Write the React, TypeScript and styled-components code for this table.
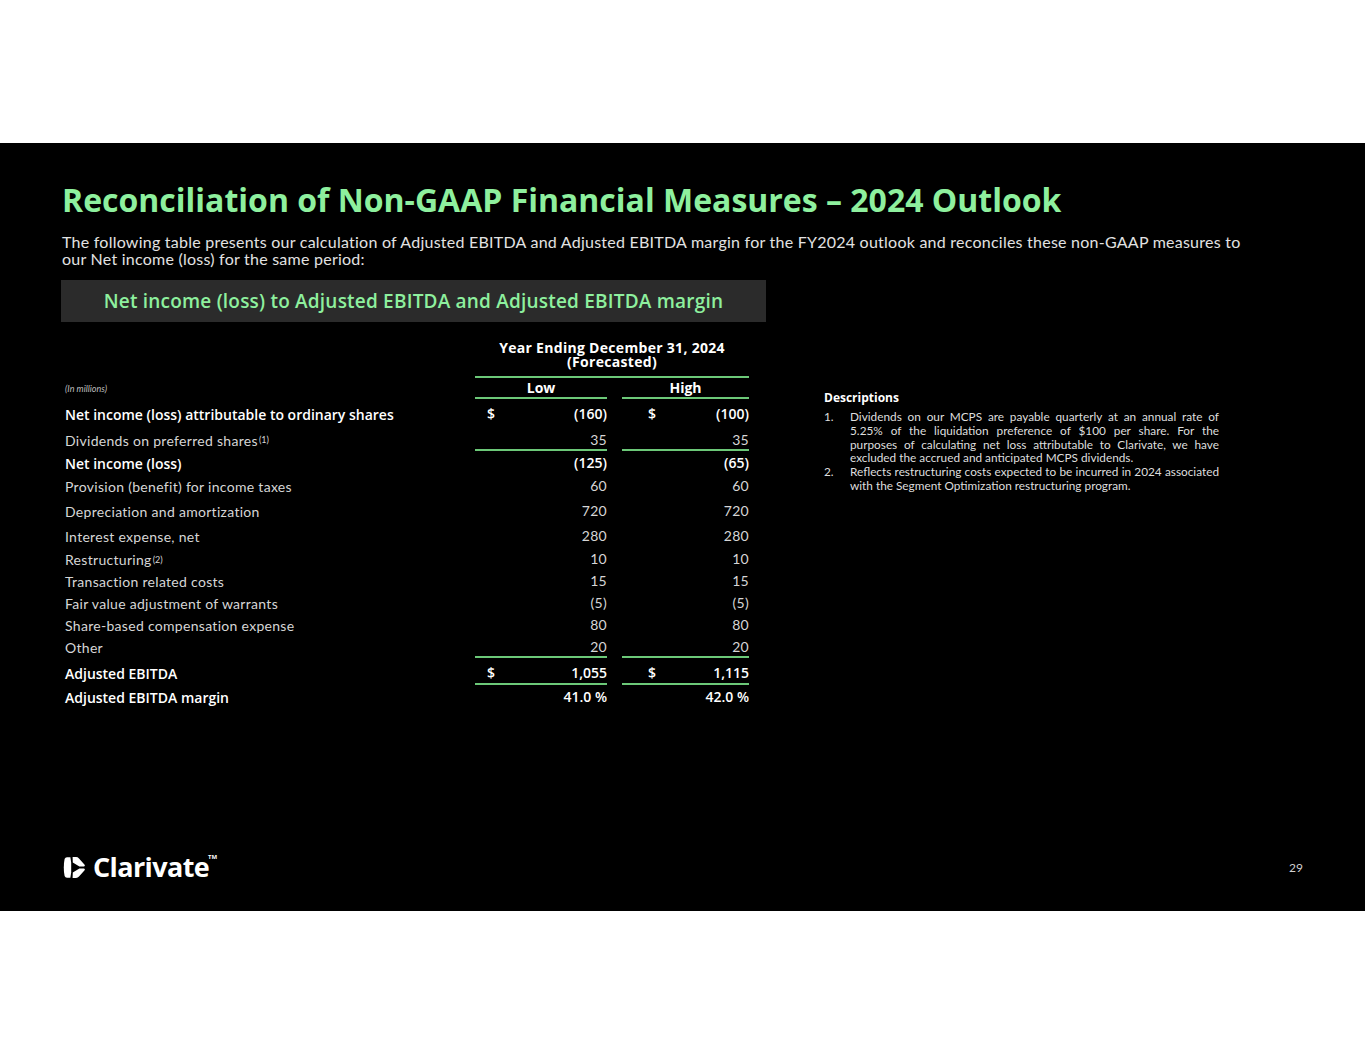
import styled, { createGlobalStyle } from "styled-components";

const GlobalStyle = createGlobalStyle`
  html, body {
    margin: 0;
    padding: 0;
    background: #ffffff;
  }
  body {
    font-family: "Lato", "Liberation Sans", sans-serif;
  }
`;

const GREEN = "#8ef09e";
const LINE = "#6cc878";
const HEAVY = `"Open Sans", "Lato", sans-serif`;

const Page = styled.div`
  width: 1365px;
  height: 1055px;
  padding-top: 143px;
  box-sizing: border-box;
  background: #fff;
`;

const Slide = styled.section`
  width: 1365px;
  height: 768px;
  background: #000;
  box-sizing: border-box;
  padding: 38px 62px 31px 62px;
  display: flex;
  flex-direction: column;
  color: #fff;
`;

const Title = styled.h1`
  margin: 0;
  font-family: ${HEAVY};
  font-size: 32px;
  line-height: 37px;
  font-weight: 700;
  color: ${GREEN};
  white-space: nowrap;
`;

const Intro = styled.p`
  margin: 15px 0 0 0;
  font-size: 16px;
  line-height: 17px;
  letter-spacing: 0.24px;
  color: #e2e2e2;
  max-width: 1184px;
`;

const Content = styled.div`
  display: flex;
  flex-direction: row;
  align-items: flex-start;
  margin-top: 13px;
`;

const LeftCol = styled.div`
  width: 705px;
  margin-left: -1px;
`;

const Banner = styled.div`
  height: 42px;
  background: #2b2b2b;
  display: flex;
  align-items: center;
  justify-content: center;
  color: ${GREEN};
  font-family: ${HEAVY};
  font-size: 19px;
  font-weight: 600;
  letter-spacing: 0.2px;
`;

const Table = styled.div`
  margin: 19px 0 0 4px;
  display: flex;
  flex-direction: column;
`;

const Row = styled.div<{ $h: number; $bold?: boolean }>`
  display: grid;
  grid-template-columns: 395px 132px 127px;
  column-gap: 15px;
  height: ${(p) => p.$h}px;
  font-size: 14px;
  font-family: ${(p) => (p.$bold ? HEAVY : `"Lato", sans-serif`)};
  font-weight: ${(p) => (p.$bold ? 600 : 400)};
  letter-spacing: ${(p) => (p.$bold ? "0" : "0.3px")};
  color: ${(p) => (p.$bold ? "#ffffff" : "#d6d6d6")};
`;

const Label = styled.div<{ $pt?: number }>`
  display: flex;
  align-items: center;
  padding-top: ${(p) => p.$pt ?? 0}px;
  white-space: nowrap;
`;

const Sup = styled.sup`
  font-size: 9px;
  line-height: 0;
  margin-left: 1px;
  letter-spacing: 0;
`;

const Value = styled.div<{ $line?: boolean; $pad: number; $pt?: number }>`
  display: flex;
  align-items: center;
  justify-content: space-between;
  padding-left: ${(p) => p.$pad}px;
  padding-top: ${(p) => p.$pt ?? 0}px;
  border-bottom: 2px solid ${(p) => (p.$line ? LINE : "transparent")};
`;

const Heading = styled.div`
  grid-column: 2 / 4;
  text-align: center;
  font-family: ${HEAVY};
  font-size: 14px;
  line-height: 14px;
  font-weight: 700;
  color: #fff;
  border-bottom: 2px solid ${LINE};
`;

const ColHead = styled.div`
  display: flex;
  align-items: center;
  justify-content: center;
  font-family: ${HEAVY};
  font-weight: 700;
  letter-spacing: 0;
  color: #fff;
  border-bottom: 2px solid ${LINE};
`;

const Units = styled.div`
  display: flex;
  align-items: center;
  font-size: 9px;
  font-style: italic;
  letter-spacing: 0;
  color: #bdbdbd;
`;

const RightCol = styled.aside`
  width: 395px;
  margin: 111px 0 0 58px;
`;

const DescTitle = styled.div`
  font-family: ${HEAVY};
  font-size: 12px;
  line-height: 14px;
  font-weight: 700;
  color: #fff;
`;

const Notes = styled.ol`
  list-style: none;
  margin: 5px 0 0 0;
  padding: 0;
`;

const Note = styled.li`
  display: grid;
  grid-template-columns: 26px 369px;
  font-size: 11.8px;
  line-height: 13.8px;
  color: #dedede;
`;

const NoteText = styled.span`
  text-align: justify;
`;

const Footer = styled.footer`
  margin-top: auto;
  display: flex;
  align-items: center;
  justify-content: space-between;
  height: 26px;
`;

const Logo = styled.div`
  display: flex;
  align-items: center;
  gap: 7px;
  margin-left: 1px;
`;

const Wordmark = styled.span`
  position: relative;
  font-family: ${HEAVY};
  font-size: 27px;
  font-weight: 700;
  letter-spacing: -0.6px;
  color: #fff;
  line-height: 26px;
`;

const TM = styled.span`
  position: absolute;
  right: -8px;
  top: 0px;
  font-size: 6px;
  line-height: 6px;
  letter-spacing: 0;
`;

const PageNum = styled.span`
  font-size: 12px;
  color: #d0d0d0;
`;

type Line = {
  label: string;
  sup?: string;
  low: string;
  high: string;
  h: number;
  bold?: boolean;
  dollar?: boolean;
  line?: boolean;
  pt?: number;
};

const rows: Line[] = [
  { label: "Net income (loss) attributable to ordinary shares", low: "(160)", high: "(100)", h: 30, bold: true, dollar: true },
  { label: "Dividends on preferred shares", sup: "(1)", low: "35", high: "35", h: 22, line: true },
  { label: "Net income (loss)", low: "(125)", high: "(65)", h: 24, bold: true },
  { label: "Provision (benefit) for income taxes", low: "60", high: "60", h: 23 },
  { label: "Depreciation and amortization", low: "720", high: "720", h: 26 },
  { label: "Interest expense, net", low: "280", high: "280", h: 25 },
  { label: "Restructuring ", sup: "(2)", low: "10", high: "10", h: 21 },
  { label: "Transaction related costs", low: "15", high: "15", h: 22 },
  { label: "Fair value adjustment of warrants", low: "(5)", high: "(5)", h: 22 },
  { label: "Share-based compensation expense", low: "80", high: "80", h: 22 },
  { label: "Other", low: "20", high: "20", h: 22, line: true },
  { label: "Adjusted EBITDA", low: "1,055", high: "1,115", h: 27, bold: true, dollar: true, line: true, pt: 4 },
  { label: "Adjusted EBITDA margin", low: "41.0 %", high: "42.0 %", h: 25, bold: true },
];

const ClarivateMark = () => (
  <svg width="23" height="23" viewBox="0 0 23 23" fill="#fff">
    <path d="M4 1.2 L7.4 1.2 L8.2 6.8 L8.2 16.2 L7.4 21.8 L4 21.8 Q2.2 21.8 1.6 20 Q0.8 16 0.8 11.5 Q0.8 7 1.6 3 Q2.2 1.2 4 1.2 Z" />
    <path d="M9.6 1 L13 1 Q14.8 1 16 2.4 L21.6 8.8 Q22.6 10.6 20.8 10.6 L16.4 10.6 L9.8 6.4 Z" />
    <path d="M9.6 22 L13 22 Q14.8 22 16 20.6 L21.6 14.2 Q22.6 12.4 20.8 12.4 L16.4 12.4 L9.8 16.6 Z" />
  </svg>
);

const App = () => {
  return (
    <Page>
      <GlobalStyle />
      <Slide>
        <Title>Reconciliation of Non-GAAP Financial Measures – 2024 Outlook</Title>
        <Intro>
          The following table presents our calculation of Adjusted EBITDA and Adjusted EBITDA margin for the FY2024 outlook and
          reconciles these non-GAAP measures to our Net income (loss) for the same period:
        </Intro>
        <Content>
          <LeftCol>
            <Banner>Net income (loss) to Adjusted EBITDA and Adjusted EBITDA margin</Banner>
            <Table>
              <Row $h={37}>
                <Label />
                <Heading>
                  Year Ending December 31, 2024
                  <br />
                  (Forecasted)
                </Heading>
              </Row>
              <Row $h={21}>
                <Units>(In millions)</Units>
                <ColHead>Low</ColHead>
                <ColHead>High</ColHead>
              </Row>
              {rows.map((r) => (
                <Row key={r.label} $h={r.h} $bold={r.bold}>
                  <Label $pt={r.pt}>
                    {r.label}
                    {r.sup && <Sup>{r.sup}</Sup>}
                  </Label>
                  <Value $pad={12} $line={r.line} $pt={r.pt}>
                    <span>{r.dollar ? "$" : ""}</span>
                    <span>{r.low}</span>
                  </Value>
                  <Value $pad={26} $line={r.line} $pt={r.pt}>
                    <span>{r.dollar ? "$" : ""}</span>
                    <span>{r.high}</span>
                  </Value>
                </Row>
              ))}
            </Table>
          </LeftCol>
          <RightCol>
            <DescTitle>Descriptions</DescTitle>
            <Notes>
              <Note>
                <span>1.</span>
                <NoteText>
                  Dividends on our MCPS are payable quarterly at an annual rate of 5.25% of the liquidation preference of $100
                  per share. For the purposes of calculating net loss attributable to Clarivate, we have excluded the accrued
                  and anticipated MCPS dividends.
                </NoteText>
              </Note>
              <Note>
                <span>2.</span>
                <NoteText>
                  Reflects restructuring costs expected to be incurred in 2024 associated with the Segment Optimization
                  restructuring program.
                </NoteText>
              </Note>
            </Notes>
          </RightCol>
        </Content>
        <Footer>
          <Logo>
            <ClarivateMark />
            <Wordmark>
              Clarivate
              <TM>TM</TM>
            </Wordmark>
          </Logo>
          <PageNum>29</PageNum>
        </Footer>
      </Slide>
    </Page>
  );
};

export default App;
